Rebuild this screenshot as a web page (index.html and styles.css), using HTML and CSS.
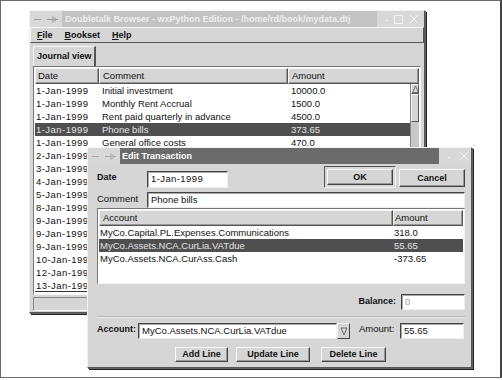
FILE: index.html
```html
<!DOCTYPE html>
<html lang="en">
<head>
    <meta charset="UTF-8">
    <title>Doubletalk Browser</title>
    <link rel="stylesheet" href="styles.css">
</head>
<body>
    <div class="figure">

        <div class="win main">
            <div class="titlebar">
                <div class="tb-icons">
                    <svg width="32" height="16" viewBox="0 0 32 16"><path d="M4 8.5h7M17 8.5h6M23 5.5v6M25 6.5v4M25 8.5h3" stroke="#9c9c9c" stroke-width="1.2" fill="none"/></svg>
                </div>
                <div class="tb-title">Doubletalk Browser - wxPython Edition - /home/rd/book/mydata.dtj</div>
                <div class="tb-buttons wide">
                    <svg width="47" height="16" viewBox="0 0 47 16"><path d="M9 9.5h1.5" stroke="#f4f4f4" stroke-width="1.2"/><rect x="17.5" y="4.5" width="8" height="8" fill="none" stroke="#f4f4f4"/><path d="M33 4l8 8M41 4l-8 8" stroke="#f4f4f4" stroke-width="1"/></svg>
                </div>
            </div>

            <div class="menubar">
                <span><u>F</u>ile</span>
                <span><u>B</u>ookset</span>
                <span><u>H</u>elp</span>
            </div>

            <div class="tabs">
                <div class="tab">Journal view</div>
            </div>

            <div class="listbox">
                <div class="header">
                    <div class="hcell c-date">Date</div>
                    <div class="hcell c-comment">Comment</div>
                    <div class="hcell c-amount">Amount</div>
                </div>
                <div class="list-body">
                    <div class="rows">
                        <div class="row"><span class="c-date date">1-Jan-1999</span><span class="c-comment">Initial investment</span><span class="c-amount">10000.0</span></div>
                        <div class="row"><span class="c-date date">1-Jan-1999</span><span class="c-comment">Monthly Rent Accrual</span><span class="c-amount">1500.0</span></div>
                        <div class="row"><span class="c-date date">1-Jan-1999</span><span class="c-comment">Rent paid quarterly in advance</span><span class="c-amount">4500.0</span></div>
                        <div class="row selected"><span class="c-date date">1-Jan-1999</span><span class="c-comment">Phone bills</span><span class="c-amount">373.65</span></div>
                        <div class="row"><span class="c-date date">1-Jan-1999</span><span class="c-comment">General office costs</span><span class="c-amount">470.0</span></div>
                        <!-- rows below are covered by the dialog except for the date -->
                        <div class="row"><span class="c-date date">2-Jan-1999</span></div>
                        <div class="row"><span class="c-date date">3-Jan-1999</span></div>
                        <div class="row"><span class="c-date date">4-Jan-1999</span></div>
                        <div class="row"><span class="c-date date">5-Jan-1999</span></div>
                        <div class="row"><span class="c-date date">8-Jan-1999</span></div>
                        <div class="row"><span class="c-date date">9-Jan-1999</span></div>
                        <div class="row"><span class="c-date date">9-Jan-1999</span></div>
                        <div class="row"><span class="c-date date">9-Jan-1999</span></div>
                        <div class="row"><span class="c-date date">10-Jan-1999</span></div>
                        <div class="row"><span class="c-date date">12-Jan-1999</span></div>
                        <div class="row last"><span class="c-date date">13-Jan-1999</span></div>
                    </div>
                    <div class="scrollbar">
                        <div class="sb-arrow">
                            <svg width="7" height="8" viewBox="0 0 7 8"><path d="M3.5 1L0.5 7.5h6z" fill="none" stroke="#555" stroke-width="0.8"/></svg>
                        </div>
                        <div class="sb-thumb"></div>
                        <div class="sb-trough"></div>
                    </div>
                </div>
            </div>

            <div class="statusbar"><div class="status-field"></div></div>
        </div>

        <div class="win dialog">
            <div class="titlebar active">
                <div class="tb-icons">
                    <svg width="32" height="16" viewBox="0 0 32 16"><path d="M4 8.5h7M17 8.5h6M23 5.5v6M25 6.5v4M25 8.5h3" stroke="#a8a8a8" stroke-width="1.2" fill="none"/></svg>
                </div>
                <div class="tb-title">Edit Transaction</div>
                <div class="tb-buttons">
                    <svg width="32" height="16" viewBox="0 0 32 16"><path d="M9 9.5h1.5" stroke="#f4f4f4" stroke-width="1.2"/><path d="M21 4l8 8M29 4l-8 8" stroke="#f4f4f4" stroke-width="1"/></svg>
                </div>
            </div>

            <div class="dlg-body">
                <div class="dlg-row first">
                    <label class="lbl bold date-lbl">Date</label>
                    <div class="field date-field">1-Jan-1999</div>
                    <div class="default-frame"><button class="btn ok">OK</button></div>
                    <button class="btn cancel">Cancel</button>
                </div>

                <div class="dlg-row comment-row">
                    <label class="lbl comment-lbl">Comment</label>
                    <div class="field grow">Phone bills</div>
                </div>

                <div class="listbox lines">
                    <div class="header">
                        <div class="hcell c-account">Account</div>
                        <div class="hcell c-lamount">Amount</div>
                    </div>
                    <div class="row"><span class="c-account">MyCo.Capital.PL.Expenses.Communications</span><span class="c-lamount">318.0</span></div>
                    <div class="row selected"><span class="c-account">MyCo.Assets.NCA.CurLia.VATdue</span><span class="c-lamount">55.65</span></div>
                    <div class="row"><span class="c-account">MyCo.Assets.NCA.CurAss.Cash</span><span class="c-lamount">-373.65</span></div>
                </div>

                <div class="dlg-row balance-row">
                    <label class="lbl bold">Balance:</label>
                    <div class="field small muted">0</div>
                </div>

                <div class="separator"></div>

                <div class="dlg-row account-row">
                    <label class="lbl bold account-lbl">Account:</label>
                    <div class="combo">
                        <div class="field grow">MyCo.Assets.NCA.CurLia.VATdue</div>
                        <div class="combo-btn">
                            <svg width="8" height="10" viewBox="0 0 8 10"><path d="M1 2h6L4 9z" fill="none" stroke="#555" stroke-width="0.8"/></svg>
                        </div>
                    </div>
                    <label class="lbl amount-lbl">Amount:</label>
                    <div class="field small">55.65</div>
                </div>

                <div class="dlg-row buttons-row">
                    <button class="btn add">Add Line</button>
                    <button class="btn update">Update Line</button>
                    <button class="btn delete">Delete Line</button>
                </div>
            </div>
        </div>

    </div>
</body>
</html>
```

FILE: styles.css
```css
* {
    box-sizing: border-box;
}

body {
    margin: 0;
    background: #fff;
    font-family: "Liberation Sans", Arial, sans-serif;
    font-size: 9.5px;
    color: #111;
}

.figure {
    position: relative;
    width: 502px;
    height: 378px;
    border: 1px solid #6a6a6a;
    border-right: 2px solid #444;
    overflow: hidden;
}

/* windows on the desktop */
.win {
    position: absolute;
    background: #d6d6d6;
    border: 1px solid;
    border-color: #f2f2f2 #555 #555 #f2f2f2;
    box-shadow: 1px 1px 0 #666, 2px 2px 0 #222;
    display: flex;
    flex-direction: column;
}

.main {
    left: 28px;
    top: 9px;
    width: 396px;
    height: 303px;
}

.dialog {
    left: 86px;
    top: 146px;
    width: 385px;
    height: 221px;
}

.titlebar {
    display: flex;
    height: 16px;
    background: #d8d8d8;
}

.tb-icons {
    width: 32px;
}

.tb-title {
    flex: 1;
    background: #c3c3c3;
    color: #eeeeee;
    font-weight: bold;
    font-size: 9px;
    line-height: 16px;
    padding-left: 3px;
    white-space: nowrap;
    overflow: hidden;
}

.titlebar.active .tb-title {
    background: #6b6b6b;
    color: #fff;
    padding-left: 2px;
}

.tb-buttons {
    width: 32px;
}

.tb-buttons.wide {
    width: 47px;
}

svg {
    display: block;
}

.menubar {
    display: flex;
    align-items: center;
    gap: 12px;
    height: 16px;
    padding-left: 6px;
    border: 1px solid;
    border-color: #f4f4f4 #555 #555 #f4f4f4;
    font-weight: bold;
    font-size: 9px;
}

.tabs {
    height: 23px;
    padding: 3px 0 0 3px;
    display: flex;
    align-items: flex-end;
}

.tab {
    height: 20px;
    width: 63px;
    padding-left: 3px;
    line-height: 19px;
    font-weight: bold;
    font-size: 9px;
    white-space: nowrap;
    border-left: 1px solid #f4f4f4;
    border-top: 1px solid #f4f4f4;
    border-right: 2px solid #555;
}

/* list controls */
.listbox {
    margin: 0 3px;
    height: 229px;
    background: #fff;
    border: 1px solid;
    border-color: #777 #f4f4f4 #f4f4f4 #777;
    padding: 1px;
    display: flex;
    flex-direction: column;
    overflow: hidden;
}

.header {
    display: flex;
    height: 16px;
    flex-shrink: 0;
}

.hcell {
    background: #d6d6d6;
    border: 1px solid;
    border-color: #f6f6f6 #555 #555 #f6f6f6;
    box-shadow: inset -1px -1px 0 #999;
    line-height: 14px;
    padding-left: 2px;
    white-space: nowrap;
}

.list-body {
    display: flex;
    flex: 1;
    min-height: 0;
}

.rows {
    flex: 1;
    overflow: hidden;
}

.row {
    display: flex;
    height: 13px;
    line-height: 13px;
    white-space: nowrap;
}

.row.selected {
    background: #4f4f4f;
    color: #e4e4e4;
}

.row.last {
    border-bottom: 1px solid #333;
}

.c-date {
    width: 64px;
    flex-shrink: 0;
    padding-left: 1px;
    overflow: hidden;
}

.date {
    letter-spacing: 0.45px;
}

.c-comment {
    width: 189px;
    flex-shrink: 0;
    padding-left: 3px;
    overflow: hidden;
}

.c-amount {
    flex: 1;
    padding-left: 3px;
}

.header .c-date {
    padding-left: 2px;
}

.scrollbar {
    width: 9px;
    display: flex;
    flex-direction: column;
    background: #d6d6d6;
    border-left: 1px solid #888;
}

.sb-arrow {
    height: 10px;
    border: 1px solid;
    border-color: #f4f4f4 #555 #555 #f4f4f4;
}

.sb-thumb {
    height: 28px;
    border: 1px solid;
    border-color: #f4f4f4 #555 #555 #f4f4f4;
}

.sb-trough {
    flex: 1;
    background: #c8c8c8;
}

.statusbar {
    padding: 2px 3px 0;
}

.status-field {
    height: 14px;
    border: 1px solid;
    border-color: #888 #f4f4f4 #f4f4f4 #888;
}

/* dialog */
.dlg-body {
    padding: 2px 6px 0 9px;
}

.dlg-row {
    display: flex;
    align-items: flex-start;
}

.lbl {
    line-height: 12px;
    white-space: nowrap;
}

.bold {
    font-weight: bold;
    font-size: 9px;
}

.field {
    height: 16px;
    background: #fff;
    border: 1px solid;
    border-color: #444 #eee #eee #444;
    box-shadow: inset 1px 1px 0 #aaa;
    line-height: 14px;
    padding-left: 3px;
    white-space: nowrap;
    overflow: hidden;
}

.field.grow {
    flex: 1;
}

.field.small {
    width: 64px;
}

.field.muted {
    color: #9a9a9a;
}

.first {
    height: 22px;
}

.date-lbl {
    width: 50px;
    margin-top: 5px;
}

.date-field {
    width: 81px;
    height: 17px;
    margin-top: 5px;
    letter-spacing: 0.4px;
}

.default-frame {
    margin-left: auto;
    width: 72px;
    height: 22px;
    padding: 2px;
    border: 1px solid;
    border-color: #555 #f4f4f4 #f4f4f4 #555;
}

.btn {
    font-family: inherit;
    font-size: 9px;
    font-weight: bold;
    color: #111;
    background: #d6d6d6;
    border: 1px solid;
    border-color: #f8f8f8 #444 #444 #f8f8f8;
    box-shadow: inset -1px -1px 0 #999;
    padding: 0;
    height: 15px;
    line-height: 13px;
}

.ok {
    width: 100%;
    height: 100%;
}

.cancel {
    width: 66px;
    height: 18px;
    margin: 3px 0 0 3px;
}

.comment-row {
    margin-top: 4px;
}

.comment-lbl {
    width: 50px;
    margin-top: 1px;
}

.lines {
    margin: 0;
    height: 76px;
}

.c-account {
    width: 294px;
    flex-shrink: 0;
    padding-left: 1px;
}

.header .c-account {
    padding-left: 3px;
}

.c-lamount {
    flex: 1;
    padding-left: 1px;
}

.balance-row {
    margin-top: 10px;
    justify-content: flex-end;
    gap: 5px;
}

.balance-row .lbl {
    margin-top: 1px;
}

.separator {
    margin-top: 6px;
    border-top: 1px solid #b6b6b6;
    border-bottom: 1px solid #ececec;
}

.account-row {
    margin-top: 5px;
}

.account-lbl {
    width: 41px;
}

.combo {
    display: flex;
    width: 212px;
}

.combo-btn {
    width: 13px;
    height: 16px;
    border: 1px solid;
    border-color: #f4f4f4 #444 #444 #f4f4f4;
    display: flex;
    align-items: center;
    justify-content: center;
}

.amount-lbl {
    width: 41px;
    margin-left: 9px;
}

.buttons-row {
    margin-top: 8px;
    padding-left: 78px;
}

.add {
    width: 53px;
}

.update {
    width: 74px;
    margin-left: 8px;
}

.delete {
    width: 65px;
    margin-left: 11px;
}
```
